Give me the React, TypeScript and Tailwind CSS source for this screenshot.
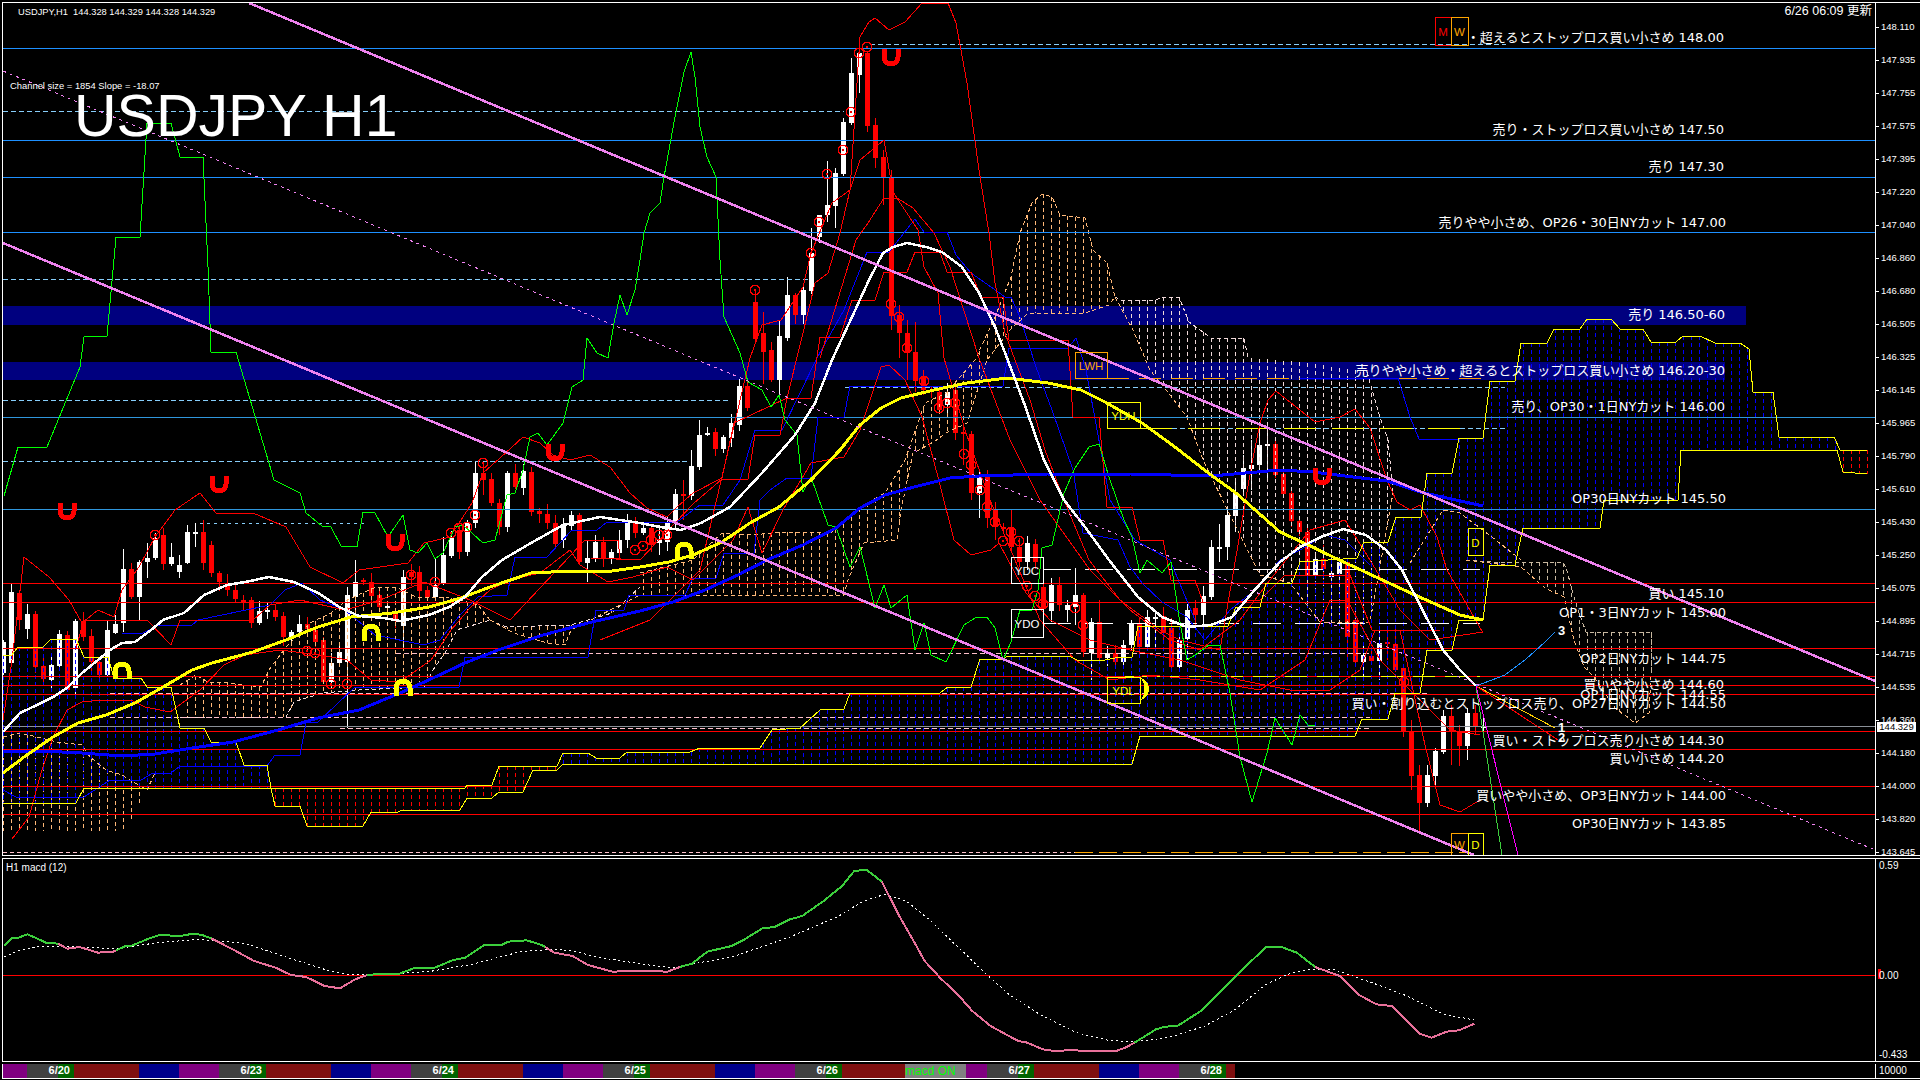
// USDJPY H1 chart, coordinates below are page pixels (flat x,y lists)
type Pts = number[];

const toPoints = (p: Pts) => p.join(" ");

// y of a flat x,y list at x
const yAt = (p: Pts, x: number) => {
  for (let i = 0; i < p.length - 2; i += 2) {
    if (x >= p[i] && x <= p[i + 2]) {
      const w = p[i + 2] - p[i] || 1;
      return p[i + 1] + ((x - p[i]) / w) * (p[i + 3] - p[i + 1]);
    }
  }
  return p[p.length - 1];
};

// vertical hatch between two boundaries, one stroke on every bar
const hatchPath = (top: Pts, bottom: Pts, from: number, to: number) => {
  let d = "";
  for (let i = 0; i < 240; i++) {
    const x = 3 + i * 8;
    if (x < from || x > to) continue;
    const a = yAt(top, x);
    const b = yAt(bottom, x);
    if (Math.abs(a - b) > 2) d += `M${x} ${a}V${b}`;
  }
  return d;
};

// x, body top, body bottom, white(1)/red(0), optional wick top, wick bottom
const candles: number[][] = [
  [3,642,673,1],[11,592,663,1,583,664],[19,593,620,0,590,630],[27,614,629,1,604,639],[35,614,667,0],[43,666,679,0],[51,665,680,1],[59,634,666,1,630,668],
  [67,635,690,0],[75,621,688,1],[83,621,637,0],[91,636,662,0],[99,662,675,0],[107,630,675,1,620,676],[115,624,633,1,615,634],[123,569,623,1,549,632],
  [131,569,597,0],[139,562,597,1,560,620],[147,558,562,1,543,578],[155,538,558,1,533,560],[163,535,564,0],[171,557,564,1,543,566],[179,565,572,1,555,578],[187,532,563,1,525,564],
  [195,532,533,1,523,547],[203,532,563,0,520,570],[211,545,573,0],[219,573,582,0],[227,583,590,0],[235,590,599,0],[243,600,603,0],[251,600,623,0],
  [259,611,623,1],[267,610,612,1],[275,610,617,0],[283,616,637,0],[291,632,637,1],[299,624,632,1],[307,624,629,0],[315,630,642,0],
  [323,640,682,0],[331,663,682,1],[339,652,663,1],[347,595,662,1,587,728],[355,582,597,1,560,610],[363,580,582,0],[371,582,596,0],[379,595,607,0],
  [387,606,608,1],[395,612,621,0],[403,577,626,1,570,650],[411,572,577,0],[419,572,591,0],[427,590,597,0],[435,585,597,1,558,600],[443,555,583,1,537,585],
  [451,538,556,1],[459,530,552,0],[467,523,552,1],[475,473,523,1,462,528],[483,473,480,0,463,495],[491,479,503,0],[499,503,527,0],[507,473,527,1],
  [515,473,487,0],[523,471,488,1],[531,472,512,0],[539,511,514,0],[547,514,523,0],[555,523,544,0],[563,524,540,1],[571,515,526,1],
  [579,515,562,0],[587,558,563,1,540,582],[595,542,558,1],[603,542,558,0],[611,552,558,1],[619,540,553,1],[627,522,540,1],[635,523,533,0],
  [643,528,533,1],[651,528,545,0],[659,540,543,1,525,555],[667,523,542,1],[675,494,523,1],[683,494,495,0,480,520],[691,466,496,1,450,500],[699,435,467,1,420,470],
  [707,433,434,1],[715,432,449,0],[723,437,449,1],[731,423,438,1],[739,386,425,1],[747,386,408,0],[755,302,339,0,290,342],[763,333,352,0,312,384],
  [771,350,380,0],[779,336,380,1,320,395],[787,295,338,1,277,341],[795,295,315,0],[803,290,315,1,283,324],[811,253,291,1,228,294],[819,215,237,1,220,243],[827,205,215,1,161,222],
  [835,173,206,1,168,228],[843,122,174,1,118,176],[851,73,123,1,58,125],[859,53,75,1,48,93],[867,53,126,0],[875,125,158,0,118,168],[883,157,178,0,150,205],[891,177,316,0,170,330],
  [899,315,333,0,305,358],[907,333,353,0,320,380],[915,352,381,0,322,392],[923,377,390,0,370,395],[931,390,392,0],[939,392,410,0],[947,392,405,1],[955,390,433,0,385,440],
  [963,432,434,0,425,465],[971,434,493,0],[979,478,493,1,470,518],[987,477,518,0,470,528],[995,510,527,0,502,540],[1003,527,529,0],[1011,528,547,0,510,552],[1019,547,562,0],
  [1027,543,562,1,536,570],[1035,544,562,0],[1043,587,608,0,570,625],[1051,585,611,1,578,622],[1059,585,605,0],[1067,605,610,1,600,622],[1075,595,607,1,568,625],[1083,595,652,0],
  [1091,622,653,1,618,680],[1099,622,658,0,600,662],[1107,653,658,1,646,666],[1115,653,662,0,645,668],[1123,645,662,1,640,666],[1131,623,645,1,620,650],[1139,623,647,0],[1147,617,647,1,610,650],
  [1155,617,618,1,610,648],[1163,616,633,0],[1171,628,667,0,618,670],[1179,640,667,1,635,672],[1187,610,639,1,604,660],[1195,608,615,0,600,625],[1203,596,615,1,586,625],[1211,547,597,1,540,600],
  [1219,547,548,1,524,562],[1227,515,547,1,507,560],[1235,493,516,1,480,532],[1243,468,489,1,455,495],[1251,465,469,1,440,490],[1259,445,465,1,425,470],[1267,444,446,1,425,480],[1275,444,475,0,438,478],
  [1283,474,494,0],[1291,493,521,0,488,527],[1299,521,532,0],[1307,532,575,0,525,580],[1315,559,575,1,552,578],[1323,559,569,0,545,580],[1331,573,577,1,565,582],[1339,562,574,1,560,590],
  [1347,562,637,0,558,660],[1355,620,662,0,610,664],[1363,655,662,1,645,680],[1371,656,661,0,650,664],[1379,643,661,1,630,680],[1387,642,644,0,627,660],[1395,644,670,0,628,672],[1403,668,732,0],
  [1411,732,776,0,720,790],[1419,775,803,0,765,833],[1427,775,803,1,765,807],[1435,751,776,1,748,788],[1443,716,752,1,710,754],[1451,716,732,0,705,765],[1459,732,746,0,725,766],[1467,713,746,1,708,760],
  [1475,713,727,0,705,735],[1483,726,727,1],
];

const fractals: Pts = [
  155,535,411,575,435,582,451,533,459,528,467,527,475,515,483,463,307,651,315,653,331,684,347,684,635,550,643,546,651,540,659,535,667,535,
  755,290,811,253,819,222,827,174,843,150,851,112,859,53,867,47,891,304,899,317,907,348,924,381,939,408,947,403,955,403,964,454,971,465,980,490,
  987,507,995,522,1003,541,1011,532,1019,541,1027,586,1035,596,1043,604,1075,608,1083,625,1404,682,
];

const redShoes: Pts = [67,512,219,485,395,543,891,58,1322,477,555,453];
const yellowShoes: Pts = [122,670,371,632,403,687,684,550];

// moving averages
const maWhite: Pts = [3,732,20,713,37,705,53,697,67,688,82,673,98,660,110,650,122,643,135,642,151,630,163,620,184,613,204,595,227,585,245,582,269,577,294,582,318,593,339,607,359,616,384,618,400,621,429,615,449,607,465,597,482,577,502,560,531,543,563,525,600,517,640,523,660,527,681,530,701,523,730,507,762,473,795,435,815,403,832,360,852,317,869,280,883,253,893,247,907,243,926,247,942,252,962,267,979,293,995,327,1007,358,1024,403,1044,460,1064,500,1085,527,1109,560,1138,597,1162,617,1187,627,1211,625,1232,617,1252,593,1280,562,1300,547,1321,537,1343,529,1366,535,1386,550,1402,570,1419,603,1443,650,1460,670,1476,686];
const maYellow: Pts = [3,773,24,757,53,737,78,723,106,715,135,703,163,687,192,670,212,663,253,652,286,640,318,627,351,617,392,613,429,607,461,598,490,587,531,573,571,571,612,571,640,567,669,562,693,555,722,542,750,523,779,507,811,480,840,450,860,425,881,408,901,398,934,390,967,383,1007,378,1048,383,1081,390,1105,402,1142,423,1175,447,1211,475,1236,493,1280,532,1304,543,1333,557,1378,578,1415,595,1460,615,1483,620];
const maBlue: Pts = [3,751,41,751,82,753,122,756,155,754,192,748,233,742,278,730,318,718,359,710,400,693,433,678,465,663,498,650,543,635,592,622,640,611,673,602,705,590,738,575,767,560,803,545,836,528,860,508,885,495,918,486,950,478,979,476,1048,474,1130,474,1211,476,1280,470,1313,472,1353,477,1387,481,1420,492,1483,506];

const green: Pts = [4,496,18,447,47,447,80,367,84,337,107,336,116,237,140,237,147,123,171,123,180,157,203,157,208,267,211,352,236,352,274,480,300,493,306,513,322,526,331,527,341,546,357,547,363,512,375,513,388,537,403,515,410,550,418,553,427,543,435,559,443,553,455,527,463,525,483,543,495,540,507,495,515,493,523,470,530,437,538,433,547,445,563,423,572,387,583,380,587,338,597,353,608,358,614,323,620,295,627,315,635,290,640,260,644,233,650,213,660,203,664,177,675,117,684,72,691,52,695,77,700,127,707,157,716,177,720,260,724,317,740,353,748,382,762,390,771,407,779,395,785,420,797,435,803,492,811,477,828,525,836,527,850,567,860,547,875,608,884,585,891,608,907,595,915,650,924,623,931,655,946,662,964,625,975,618,987,617,995,628,1003,660,1011,642,1020,610,1032,610,1038,590,1042,548,1052,545,1064,493,1075,468,1089,447,1099,444,1109,477,1124,520,1132,537,1140,573,1147,560,1162,573,1171,562,1179,617,1187,660,1195,655,1209,645,1220,645,1230,693,1240,757,1252,802,1267,753,1275,718,1292,745,1300,715,1308,725,1315,726];

// thin red envelope lines
const redLines: Pts[] = [
  [3,720,12,660,24,557,49,577,69,600,82,623,98,610,114,617,122,590,139,567,155,537,175,510,200,493,216,513,253,513,286,527,310,567,343,583,359,570,408,563,424,543,450,537,472,503,483,473,500,458,523,437,540,443,553,455,570,460,590,455,610,467,630,493,647,508,667,517,677,507,693,493,722,478,734,423,787,398,803,333,815,283,828,273,840,233,850,190,860,37,869,22,875,18,889,30,905,22,922,3,948,3,956,23,967,83,979,170,989,233,995,283,1005,333,1015,360,1030,400,1045,450,1064,500,1089,560,1120,600,1160,630,1180,640,1220,650,1252,463,1260,423,1268,400,1276,391,1315,422,1340,417,1355,409,1370,428,1387,480,1397,502,1410,510,1420,505,1437,537,1447,570,1483,633],
  [12,839,29,817,41,773,53,737,67,710,82,702,102,700,131,700,145,707,170,712,200,690,224,665,245,655,280,650,320,655,347,660,371,680,400,682,431,660,451,630,470,608,490,590,510,580,540,573,570,550,580,565,608,582,633,577,667,567,693,580,733,540,748,507,762,553,783,510,811,463,844,457,860,430,881,367,889,365,905,380,922,417,938,477,954,540,971,555,991,550,999,543,1015,573,1026,593,1050,620,1090,640,1130,650,1180,660,1240,680,1290,690,1330,690,1360,670,1375,630,1400,630,1425,745,1440,805,1460,812,1480,800],
  [600,640,650,620,700,570,750,358,762,325,781,320,803,287,811,253,832,203,850,190,860,160,884,140,893,192,918,230,924,267,938,293,944,358,965,430,990,500,1040,620,1075,660,1110,680,1150,675,1200,680,1260,690,1305,660,1330,600,1347,600,1380,660,1420,700,1450,730,1480,735],
  [820,358,856,240,868,223,884,198,897,198,913,208,934,233,950,267,979,358,1010,440,1040,500,1090,570,1130,610,1170,640,1200,650,1240,620,1270,580,1310,530,1345,520,1370,560,1400,610,1430,640,1483,632],
  [43,648,76,648,84,620,147,620,171,645,180,620,253,620,270,605,300,600,345,610,380,600,424,582,470,600,510,620,585,540,618,540,620,558,591,558,640,560,693,504,722,479,748,479,755,435,780,435,787,398,811,398,820,337,840,337,852,300,875,300,884,272,907,272,915,252,940,252,947,272,971,272,981,297,1003,297,1009,340,1068,340,1073,417,1099,417,1107,507,1132,507,1140,540,1163,540,1171,580,1195,580,1203,602,1228,602,1260,600,1285,575,1350,575,1372,630,1440,630],
];

const blueLines: Pts[] = [
  [3,790,16,797,84,797,110,780,141,780,153,773,171,773,180,766,267,766,275,755,300,755,306,723,318,722,355,687,459,687,465,657,588,657,596,610,624,610,629,595,685,595,693,578,716,578,724,553,754,553,760,500,770,490,787,478,811,478,818,417,844,417,850,386,1003,386,1009,348,1068,348,1076,338,1086,370,1110,500,1135,540,1170,560,1195,620],
  [122,633,143,633,159,625,192,625,198,620,270,605,285,590,302,583,320,600,345,610,375,635,424,645,440,640,460,615,478,597,507,595,515,557,547,557,572,530,597,530,607,522,677,522,700,505,723,505,740,480,755,430,782,430,817,358,844,310,867,252,889,252,915,219,924,232,947,232,956,255,971,273,991,287,1005,297,1011,297,1020,317,1036,367,1052,410,1073,470,1083,533,1118,540,1130,567,1142,583,1162,602,1187,617,1205,640,1230,610,1255,590,1280,560,1300,550,1325,535,1345,540,1370,565],
  [1300,378,1398,378,1410,417,1419,439,1458,439],
];

// Ichimoku span edges
const spanUpper: Pts = [3,655,12,655,18,647,43,647,51,639,76,639,84,657,108,657,114,678,141,678,147,687,171,687,180,728,204,728,211,742,236,742,244,765,267,765,271,788,465,788,467,785,492,785,499,766,557,766,563,753,588,753,596,758,620,758,627,752,690,752,700,748,760,748,772,730,800,728,820,710,844,709,850,693,940,693,948,687,971,687,980,659,1001,659,1009,656,1069,656,1077,660,1105,660,1115,658,1132,657,1138,626,1228,626,1236,607,1260,607,1266,583,1292,583,1300,562,1357,558,1364,542,1388,542,1396,517,1421,517,1427,473,1452,473,1459,438,1483,438,1490,381,1515,381,1521,343,1547,343,1554,329,1580,329,1587,319,1611,319,1620,329,1643,329,1651,342,1676,342,1683,336,1700,336,1715,343,1740,343,1749,349,1753,392,1773,392,1779,437,1834,437,1840,450,1867,450];
const spanLower: Pts = [3,803,76,803,84,788,271,788,275,806,300,806,307,826,363,826,371,812,398,812,402,810,460,810,467,798,492,798,499,792,523,792,533,770,557,770,563,764,1132,764,1140,736,1355,736,1362,719,1388,719,1395,693,1420,693,1427,650,1452,650,1459,620,1483,620,1490,565,1515,565,1523,528,1600,528,1604,500,1678,500,1681,450,1837,450,1843,472,1867,474];

// higher timeframe cloud
const tanLeftTop: Pts = [3,737,20,733,41,738,57,742,82,745,90,757,106,770,122,775,147,790,155,773];
const tanLeftBottom: Pts = [3,831,122,831,135,813,147,790,155,773];
const tanMidTop: Pts = [180,685,196,675,208,682,229,683,261,687,269,670,286,647,310,623,331,613,347,600,376,587,396,587,416,597,449,597,478,605,486,615,490,620];
const tanMidBottom: Pts = [180,718,286,717,294,702,322,693,359,690,424,687,433,670,445,653,457,630,490,620];
const tanSmallTop: Pts = [490,620,506,627,571,625,612,613,640,587];
const tanSmallBottom: Pts = [490,620,514,633,547,643,565,645,571,630,640,595];
const tanBigTop: Pts = [640,573,693,560,722,533,754,535,779,532,811,532,830,533,848,520,860,507,885,493,905,460,925,403,946,393,975,360,995,317,1011,277,1020,233,1032,203,1042,194,1052,197,1060,215,1085,218,1093,250,1107,263,1115,297];
const tanBigBottom: Pts = [640,595,844,595,848,580,864,543,897,540,901,510,913,453,934,442,946,433,967,423,987,360,1010,330,1028,313,1085,313,1109,305,1115,297];
const paleEdge: Pts = [1115,297,1120,300,1156,300,1162,297,1179,297,1189,322,1211,338,1244,338,1248,358];
const paleTop: Pts = [...paleEdge,1300,362,1367,372,1380,417,1388,440,1393,493];
const paleBottom: Pts = [1115,297,1133,330,1150,370,1170,395,1187,417,1203,460,1236,527,1260,575,1290,583,1320,622,1370,622,1393,493];
const paleRightTop: Pts = [1466,560,1492,562,1562,562,1566,567,1572,590,1578,610,1586,632,1651,632,1651,673];
const paleRightBottom: Pts = [1466,560,1521,567,1545,588,1564,597,1574,640,1584,667,1594,677,1615,708,1635,723,1649,713,1651,673];

const blueLevels = [48, 140, 177, 232];
const paleBlueLevels = [417, 509];
const redLevels = [583, 602, 648, 676, 685, 694, 731, 749, 786, 814];

// dashed day/week levels: x1, x2, y, colour, dash
const dashed: [number, number, number, string, string][] = [
  [3, 844, 111, "#87cefa", "5 3"],
  [3, 810, 279, "#87cefa", "5 3"],
  [3, 730, 400, "#87cefa", "5 3"],
  [3, 680, 461, "#87cefa", "5 3"],
  [490, 690, 461, "#87cefa", "5 3"],
  [200, 365, 523, "#87cefa", "3 4"],
  [870, 1506, 44, "#87cefa", "5 3"],
  [845, 1505, 387, "#87cefa", "5 3"],
  [1140, 1505, 428, "#87cefa", "5 3"],
  [1140, 1475, 428, "#ffff00", "32 16"],
  [1107, 1485, 378, "#ffa500", "22 10"],
  [1043, 1480, 569, "#ffffff", "28 14"],
  [1043, 1480, 623, "#ffffff", "28 14"],
  [1125, 1480, 676, "#ffff00", "22 10"],
  [396, 1370, 653, "#ffc0cb", "5 3"],
  [110, 1430, 693, "#ffc0cb", "5 3"],
  [110, 1370, 717, "#ffc0cb", "5 3"],
  [340, 1370, 728, "#ffc0cb", "5 3"],
  [3, 1075, 852, "#ffc0cb", "4 3"],
  [1075, 1470, 852, "#ffa500", "18 6"],
];

// x, y, w, h, colour, text
const tagBoxes: [number, number, number, number, string, string][] = [
  [1435, 17, 16, 28, "#ff0000", "M"],
  [1451, 17, 17, 28, "#ffa500", "W"],
  [1075, 352, 32, 26, "#ffa500", "LWH"],
  [1107, 402, 33, 26, "#ffff00", "YDH"],
  [1011, 557, 32, 26, "#ffffff", "YDC"],
  [1011, 609, 32, 28, "#ffffff", "YDO"],
  [1107, 677, 33, 26, "#ffff00", "YDL"],
  [1468, 528, 15, 27, "#ffff00", "D"],
  [1451, 833, 17, 22, "#ffa500", "W"],
  [1468, 833, 15, 22, "#ffff00", "D"],
];

const labels: [string, number, number][] = [
  ["・超えるとストップロス買い小さめ 148.00", 37, 1724],
  ["売り・ストップロス買い小さめ 147.50", 129, 1724],
  ["売り 147.30", 166, 1724],
  ["売りやや小さめ、OP26・30日NYカット 147.00", 222, 1726],
  ["売り 146.50-60", 314, 1725],
  ["売りやや小さめ・超えるとストップロス買い小さめ 146.20-30", 370, 1725],
  ["売り、OP30・1日NYカット 146.00", 406, 1725],
  ["OP30日NYカット 145.50", 498, 1726],
  ["買い 145.10", 593, 1724],
  ["OP1・3日NYカット 145.00", 612, 1726],
  ["OP2日NYカット 144.75", 658, 1726],
  ["買いやや小さめ 144.60", 684, 1724],
  ["OP1日NYカット 144.55", 694, 1726],
  ["買い・割り込むとストップロス売り、OP27日NYカット 144.50", 703, 1726],
  ["買い・ストップロス売り小さめ 144.30", 740, 1724],
  ["買い小さめ 144.20", 758, 1724],
  ["買いやや小さめ、OP3日NYカット 144.00", 795, 1726],
  ["OP30日NYカット 143.85", 823, 1726],
];

const prices = ["148.110","147.935","147.755","147.575","147.395","147.220","147.040","146.860","146.680","146.505","146.325","146.145","145.965","145.790","145.610","145.430","145.250","145.075","144.895","144.715","144.535","144.360","144.180","144.000","143.820","143.645"];

// MACD, zoom traces converted to page px
const z4 = (p: Pts) => p.map((v, i) => (i % 2 ? 840 + v / 3 : v / 1.633));
const z5 = (p: Pts) => p.map((v, i) => (i % 2 ? 840 + v / 3 : 960 + v / 1.633));

const macdSegments: { up: boolean; pts: Pts }[] = [
  { up: true, pts: z4([7,313,20,291,30,290,45,280,60,292,75,305,95,308]) },
  { up: false, pts: z4([95,308,110,323,130,318,160,335,185,332,190,328]) },
  { up: true, pts: z4([190,328,205,315,215,314,240,295,260,282,295,285,315,278,330,282,345,292]) },
  { up: false, pts: z4([345,292,380,325,415,360,450,380,475,402,500,408,530,435,555,442,580,415,600,402]) },
  { up: true, pts: z4([600,402,625,398,650,400,675,382,710,380,740,357,760,350,790,313,820,311,830,302,860,298,885,312,890,318]) },
  { up: false, pts: z4([890,318,905,335,935,345,960,372,1000,392,1030,390,1060,390,1090,392,1110,378]) },
  { up: true, pts: z4([1110,378,1130,368,1155,332,1195,315,1215,296,1245,262,1265,258,1290,235,1310,225,1345,180,1375,135,1395,90,1415,86,1440,122]) },
  { up: false, pts: z4([1440,122,1470,230,1495,310,1510,360,1535,410,1568,468]) },
  { up: false, pts: z5([0,468,20,510,50,555,95,600,110,605,135,625,155,630,185,627,200,630,255,630,270,620,285,605]) },
  { up: true, pts: z5([285,605,320,565,335,557,355,555,395,508,440,425,470,370,500,318,525,318,550,335,580,378]) },
  { up: false, pts: z5([580,378,620,405,650,460,680,490,705,495,730,540,750,578,770,590,795,572,815,568,840,548]) },
];
const macdSignal: Pts = [
  ...z4([7,348,30,328,60,318,100,317,130,318,190,323,250,307,320,295,400,307,470,350,530,385,570,402,620,400,700,392,770,370,850,332,900,325,930,328,980,350,1060,372,1100,380,1200,345,1290,288,1370,225,1410,180,1445,160,1480,180,1520,240,1568,325]),
  ...z5([5,332,40,395,80,460,130,520,190,575,240,597,280,603,340,590,400,555,450,505,500,430,535,400,570,385,610,385,680,430,730,465,790,520,840,537]),
];

const days = ["6/20", "6/23", "6/24", "6/25", "6/26", "6/27", "6/28"];

function DayGroup({ label, last }: { label: string; last?: boolean }) {
  return (
    <>
      <div className="w-[47px] bg-[linear-gradient(90deg,#404040_66%,#006400_66%)] pr-[4px] text-right text-[11px] font-bold leading-[13px] text-white">
        {label}
      </div>
      {last ? (
        <div className="w-[9px] bg-[#7f0f0f]" />
      ) : (
        <>
          <div className="w-[65px] bg-[#7f0f0f]" />
          <div className="w-[40px] bg-[#00008b]" />
          <div className="w-[40px] bg-[#800080]" />
        </>
      )}
    </>
  );
}

export default function App() {
  return (
    <div className="flex h-screen w-screen flex-col gap-[1px] overflow-hidden bg-black pl-[2px] pt-[2px] font-['Liberation_Sans',sans-serif] text-white">
      {/* price chart */}
      <div className="flex h-[854px] border-y border-white">
        <div className="border-l border-white">
          <svg viewBox="3 3 1872 852" width={1872} height={852} className="block" shapeRendering="crispEdges" fill="none">
            <rect x={3} y={306} width={1743} height={19} fill="#00007f" />
            <rect x={3} y={362} width={1722} height={18} fill="#00007f" />

            {/* candles sit under the cloud hatch */}
            {candles.map((c, i) => {
              const col = c[3] ? "#ffffff" : "#ff0000";
              const top = c[4] ?? c[1] - 2 - ((i * 7) % 9);
              const bottom = c[5] ?? c[2] + 2 + ((i * 5) % 8);
              return (
                <g key={i}>
                  <rect x={c[0]} y={top} width={1} height={bottom - top} fill={col} />
                  <rect x={c[0] - 2} y={c[1]} width={5} height={Math.max(c[2] - c[1], 2)} fill={col} />
                </g>
              );
            })}

            <g strokeDasharray="4 3" strokeWidth={1}>
              <path d={hatchPath(tanLeftTop, tanLeftBottom, 3, 155)} stroke="#ffb878" />
              <path d={hatchPath(tanMidTop, tanMidBottom, 180, 490)} stroke="#ffb878" />
              <path d={hatchPath(tanSmallTop, tanSmallBottom, 490, 640)} stroke="#ffb878" />
              <path d={hatchPath(tanBigTop, tanBigBottom, 640, 1115)} stroke="#ffb878" />
              <path d={hatchPath(paleTop, paleBottom, 1115, 1393)} stroke="#f0d8d8" />
              <path d={hatchPath(paleRightTop, paleRightBottom, 1466, 1651)} stroke="#c8b8a0" />
              <path d={hatchPath(spanUpper, spanLower, 3, 268)} stroke="#0000ff" />
              <path d={hatchPath(spanUpper, spanLower, 272, 560)} stroke="#ff0000" />
              <path d={hatchPath(spanUpper, spanLower, 563, 1836)} stroke="#0000ff" />
              <path d={hatchPath(spanUpper, spanLower, 1840, 1867)} stroke="#ff0000" />
              <polyline points={toPoints(tanLeftTop)} stroke="#ffb878" />
              <polyline points={toPoints(tanMidTop)} stroke="#ffb878" />
              <polyline points={toPoints(tanMidBottom)} stroke="#f0d8d8" />
              <polyline points={toPoints(tanSmallTop)} stroke="#f0d8d8" />
              <polyline points={toPoints(tanSmallBottom)} stroke="#ffb878" />
              <polyline points={toPoints(tanBigTop)} stroke="#ffb878" />
              <polyline points={toPoints(tanBigBottom)} stroke="#ffb878" />
              <polyline points={toPoints(paleEdge)} stroke="#f0d8d8" />
              <polyline points="1367,372 1380,417 1388,440 1393,493" stroke="#f0d8d8" />
              <polyline points={toPoints(paleBottom)} stroke="#ffb878" />
              <polyline points={toPoints(paleRightTop)} stroke="#c8b8a0" />
              <polyline points={toPoints(paleRightBottom)} stroke="#ffb878" />
              <polyline points="1410,563 1443,510 1460,513 1492,537 1521,560" stroke="#ffb878" />
            </g>

            {blueLevels.map((y) => (
              <line key={y} x1={3} x2={1875} y1={y} y2={y} stroke="#1e90ff" />
            ))}
            {paleBlueLevels.map((y) => (
              <line key={y} x1={3} x2={1875} y1={y} y2={y} stroke="#2f96dc" />
            ))}
            {redLevels.map((y) => (
              <line key={y} x1={3} x2={1875} y1={y} y2={y} stroke="#ff0000" />
            ))}
            <line x1={3} x2={1875} y1={726} y2={726} stroke="#8a9098" />
            {dashed.map((d, i) => (
              <line key={i} x1={d[0]} x2={d[1]} y1={d[2]} y2={d[2]} stroke={d[3]} strokeDasharray={d[4]} />
            ))}

            {blueLines.map((p, i) => (
              <polyline key={i} points={toPoints(p)} stroke="#0000ff" />
            ))}
            {redLines.map((p, i) => (
              <polyline key={i} points={toPoints(p)} stroke="#ff0000" />
            ))}
            <polyline points={toPoints(spanUpper)} stroke="#ffff00" />
            <polyline points={toPoints(spanLower)} stroke="#ffff00" />
            <polyline points={toPoints(green)} stroke="#00ff00" />

            <polyline points={toPoints(maBlue)} stroke="#0000ff" strokeWidth={3} />
            <polyline points={toPoints(maYellow)} stroke="#ffff00" strokeWidth={3} />
            <polyline points={toPoints(maWhite)} stroke="#ffffff" strokeWidth={2.5} />

            {fractals.map((v, i) =>
              i % 2 ? null : (
                <g key={i}>
                  <circle cx={v} cy={fractals[i + 1]} r={4.5} stroke="#ff0000" strokeWidth={1.5} />
                  <circle cx={v} cy={fractals[i + 1]} r={1.5} fill="#ff0000" />
                </g>
              )
            )}
            {redShoes.map((v, i) =>
              i % 2 ? null : (
                <path key={i} d={`M${v - 7} ${redShoes[i + 1] - 9}V${redShoes[i + 1] - 1}A7 7 0 0 0 ${v + 7} ${redShoes[i + 1] - 1}V${redShoes[i + 1] - 9}`} stroke="#ff0000" strokeWidth={5} />
              )
            )}
            {yellowShoes.map((v, i) =>
              i % 2 ? null : (
                <path key={i} d={`M${v - 7} ${yellowShoes[i + 1] + 9}V${yellowShoes[i + 1] + 1}A7 7 0 0 1 ${v + 7} ${yellowShoes[i + 1] + 1}V${yellowShoes[i + 1] + 9}`} stroke="#ffff00" strokeWidth={5} />
              )
            )}
            <path d="M1142 679a11 11 0 0 1 0 20a18 18 0 0 0 0-20z" fill="#ffff00" stroke="#ffff00" />

            <polyline points="1476,686 1505,675 1525,660 1545,642 1555,632" stroke="#1e90ff" />
            <line x1={1476} y1={686} x2={1555} y2={728} stroke="#ffd000" />
            <line x1={1476} y1={686} x2={1558} y2={740} stroke="#ff0000" />
            <line x1={1476} y1={686} x2={1502} y2={855} stroke="#3ccf3c" />
            <line x1={1476} y1={686} x2={1518} y2={855} stroke="#ff00ff" />

            <line x1={3} y1={71} x2={1875} y2={850} stroke="#ee82ee" strokeDasharray="3 4" />
            <line x1={249} y1={3} x2={1875} y2={681} stroke="#ee82ee" strokeWidth={2.5} />
            <line x1={3} y1={243} x2={1474} y2={855} stroke="#ee82ee" strokeWidth={2.5} />

            {tagBoxes.map((b, i) => (
              <g key={i}>
                <rect x={b[0] + 0.5} y={b[1] + 0.5} width={b[2]} height={b[3]} stroke={b[4]} />
                <text x={b[0] + b[2] / 2} y={b[1] + b[3] / 2 + 5} textAnchor="middle" fill={b[4]} className="text-[11.5px]">
                  {b[5]}
                </text>
              </g>
            ))}

            <g className="fill-white font-['DejaVu_Sans','Noto_Sans_CJK_JP',sans-serif] text-[13px]">
              {labels.map(([t, y, right]) => (
                <text key={y} x={right} y={y + 5} textAnchor="end">
                  {t}
                </text>
              ))}
            </g>
            <g className="fill-white text-[13px] font-bold">
              <text x={1558} y={635}>3</text>
              <text x={1558} y={732}>1</text>
              <text x={1558} y={742}>2</text>
            </g>

            <text x={74} y={136} fill="#ffffff" className="text-[59px]">USDJPY H1</text>
            <text x={18} y={15} fill="#ffffff" className="text-[9.3px]" xmlSpace="preserve">USDJPY,H1  144.328 144.329 144.328 144.329</text>
            <text x={10} y={89} fill="#ffffff" className="text-[9.4px]">Channel size = 1854 Slope = -18.07</text>
            <text x={1872} y={15} textAnchor="end" fill="#ffffff" className="font-['Liberation_Sans','Noto_Sans_CJK_JP',sans-serif] text-[12.5px]">
              6/26 06:09 更新
            </text>
          </svg>
        </div>

        {/* price axis */}
        <div className="relative flex w-[45px] flex-col border-l border-white pt-[8px]">
          {prices.map((p) => (
            <div key={p} className="flex h-[33px] shrink-0 items-center gap-[2px] text-[9.5px]">
              <span className="h-px w-[3px] bg-white" />
              {p}
            </div>
          ))}
          <div className="absolute left-[1px] top-[719px] h-[10px] w-[39px] bg-white text-center text-[9.5px] leading-[10px] text-black">144.329</div>
        </div>
      </div>

      {/* macd */}
      <div className="mt-[1px] flex h-[204px] border-y border-white">
        <div className="border-l border-white">
          <svg viewBox="3 858 1872 202" width={1872} height={202} className="block" shapeRendering="crispEdges" fill="none">
            <line x1={3} x2={1875} y1={974} y2={974} stroke="#ff0000" />
            <polyline points={toPoints(macdSignal)} stroke="#ffffff" strokeDasharray="2 3" />
            {macdSegments.map((s, i) => (
              <polyline key={i} points={toPoints(s.pts)} stroke={s.up ? "#3ccf3c" : "#e8709a"} strokeWidth={2} />
            ))}
            <text x={6} y={870} fill="#ffffff" className="text-[10px]">H1  macd (12)</text>
          </svg>
        </div>
        <div className="flex w-[45px] flex-col border-l border-white pl-[3px] text-[10px] leading-[12px]">
          <div className="mt-[1px]">0.59</div>
          <div className="relative mt-[98px]">
            <span className="absolute -left-[1px] -top-[1px] h-[10px] w-[3px] bg-[#ff0000]" />
            <span className="relative">0.00</span>
          </div>
          <div className="mt-[67px]">-0.433</div>
        </div>
      </div>

      {/* time scale with session blocks */}
      <div className="mt-[1px] flex h-[15px] border-b border-white">
        <div className="relative flex w-[1873px] border-l border-white">
          <div className="w-[24px] bg-[#800080]" />
          {days.slice(0, 5).map((d) => (
            <DayGroup key={d} label={d} />
          ))}
          <div className="absolute bottom-0 left-[902px] top-0 w-[61px] bg-[#808080] text-[12px] leading-[15px] text-[#00ff00]">macd ON</div>
          <DayGroup label={days[5]} />
          <DayGroup label={days[6]} last />
        </div>
        <div className="w-[45px] border-l border-white pl-[3px] text-[10px] leading-[13px]">10000</div>
      </div>
    </div>
  );
}
